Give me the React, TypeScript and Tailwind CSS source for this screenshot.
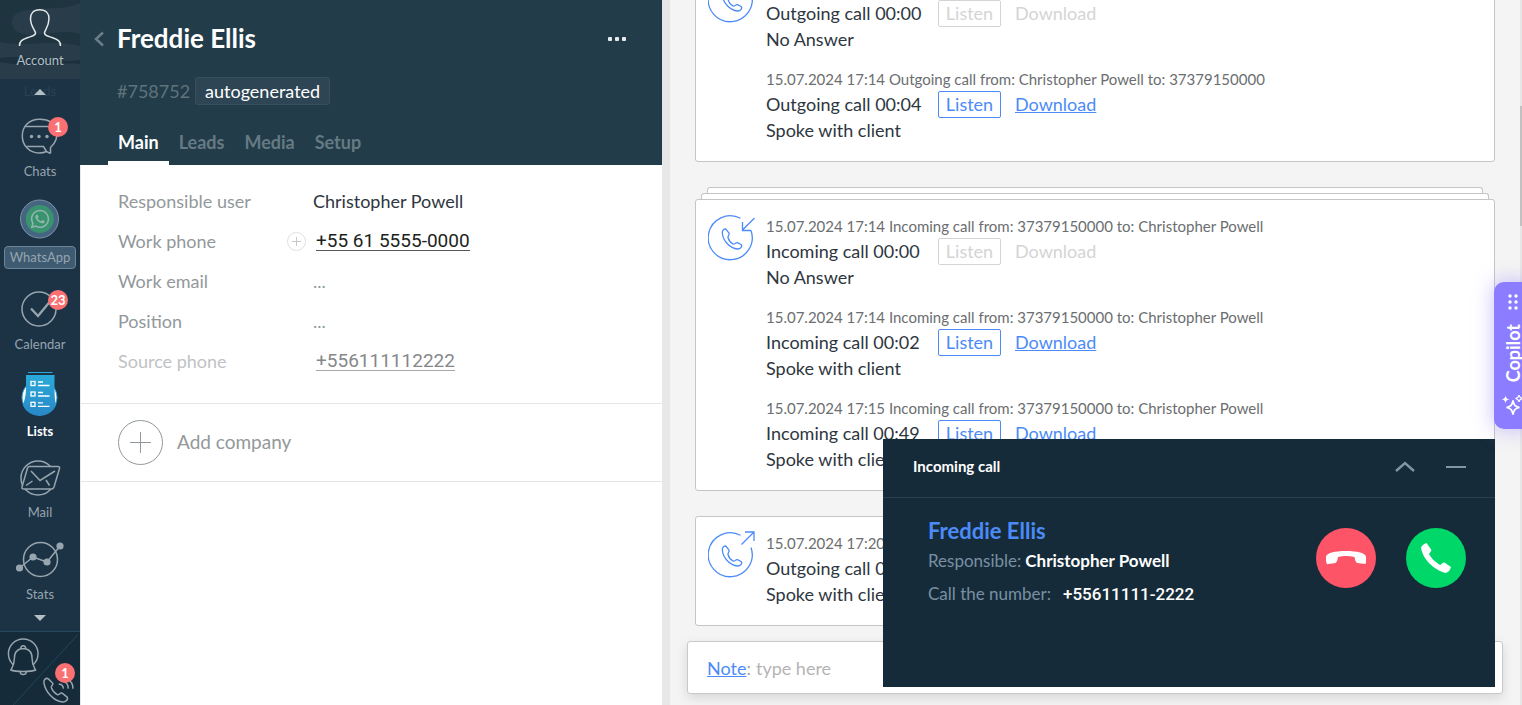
import type { ReactNode } from "react";
import { FaWhatsapp } from "react-icons/fa";

interface CallEntry {
  meta: string;
  title: string;
  result: string;
  recording?: "ready" | "missing";
}

interface NavItem {
  label: string;
  icon: ReactNode;
  height: string;
  badge?: string;
  variant?: "boxed" | "active";
}

const outgoingCalls: CallEntry[] = [
  {
    meta: "15.07.2024 17:14 Outgoing call from: Christopher Powell to: 37379150000",
    title: "Outgoing call 00:00",
    result: "No Answer",
    recording: "missing",
  },
  {
    meta: "15.07.2024 17:14 Outgoing call from: Christopher Powell to: 37379150000",
    title: "Outgoing call 00:04",
    result: "Spoke with client",
    recording: "ready",
  },
];

const incomingCalls: CallEntry[] = [
  {
    meta: "15.07.2024 17:14 Incoming call from: 37379150000 to: Christopher Powell",
    title: "Incoming call 00:00",
    result: "No Answer",
    recording: "missing",
  },
  {
    meta: "15.07.2024 17:14 Incoming call from: 37379150000 to: Christopher Powell",
    title: "Incoming call 00:02",
    result: "Spoke with client",
    recording: "ready",
  },
  {
    meta: "15.07.2024 17:15 Incoming call from: 37379150000 to: Christopher Powell",
    title: "Incoming call 00:49",
    result: "Spoke with client",
    recording: "ready",
  },
];

const lastCalls: CallEntry[] = [
  {
    meta: "15.07.2024 17:20",
    title: "Outgoing call 0",
    result: "Spoke with client",
  },
];

function NavSvg({ children }: { children: ReactNode }) {
  return (
    <svg
      className="h-[52px] w-20 shrink-0"
      viewBox="0 0 80 52"
      fill="none"
      stroke="#97a5ae"
      strokeWidth="1.5"
    >
      {children}
    </svg>
  );
}

const navItems: NavItem[] = [
  {
    label: "Chats",
    height: "h-[76px]",
    badge: "1",
    icon: (
      <NavSvg>
        <path d="M50.5 44.5 V38.5 C61 30 59.5 10.5 40 10.3 C28 10.3 22.3 18 22.3 27 C22.3 36.5 29.5 44 39 44 C42 44 44.5 43.5 46.5 42.5 L50.5 44.5" />
        <path d="M25.5 17.5 H48 M26.5 37.5 H43.5 L46.5 42.5" />
        <g fill="#97a5ae" stroke="none">
          <circle cx="31.5" cy="27.5" r="1.7" />
          <circle cx="39" cy="27.5" r="1.7" />
          <circle cx="47" cy="27.5" r="1.7" />
        </g>
      </NavSvg>
    ),
  },
  {
    label: "WhatsApp",
    height: "h-[88px]",
    variant: "boxed",
    icon: (
      <NavSvg>
        <circle cx="39.5" cy="25" r="19" fill="#466580" stroke="#7c93a5" strokeWidth="1" />
        <circle cx="39.8" cy="25" r="14" fill="#39936f" stroke="none" />
        <FaWhatsapp x="29.5" y="14.5" size={21} color="#8fb5ad" stroke="none" strokeWidth="0" />
      </NavSvg>
    ),
  },
  {
    label: "Calendar",
    height: "h-[85px]",
    badge: "23",
    icon: (
      <NavSvg>
        <circle cx="39" cy="27" r="17" />
        <path d="M31 26.5 L38 34 L50 19.5" strokeWidth="2.4" />
      </NavSvg>
    ),
  },
  {
    label: "Lists",
    height: "h-[87px]",
    variant: "active",
    icon: (
      <NavSvg>
        <defs>
          <linearGradient id="listsFill" x1="0" y1="0" x2="0" y2="1">
            <stop offset="0" stopColor="#2aaad9" />
            <stop offset="1" stopColor="#2888c8" />
          </linearGradient>
        </defs>
        <circle cx="39.5" cy="28.5" r="17.5" fill="#fff" stroke="#2a98cf" strokeWidth="1" />
        <path
          d="M26 6 H54.5 V19 C54.5 29 55.5 34 56.3 36 A18.3 18.3 0 0 1 22.7 36 C24 33 26 28 26 19 Z"
          fill="url(#listsFill)"
          stroke="none"
        />
        <path d="M28 3.5 H52.5" stroke="#2aaad9" strokeWidth="1" />
        <g stroke="#fff" strokeWidth="1.3">
          <rect x="31" y="12.5" width="4" height="4" />
          <rect x="31" y="23" width="4" height="4" />
          <rect x="31" y="33.3" width="4" height="4" />
          <path d="M38 13 H43 M38 16.5 H49.5 M38 23.5 H43 M38 27 H49.5 M38 33.8 H43 M38 37.3 H49.5" />
        </g>
      </NavSvg>
    ),
  },
  {
    label: "Mail",
    height: "h-[81px]",
    icon: (
      <NavSvg>
        <circle cx="38" cy="28" r="17" />
        <path
          d="M29.5 16.5 H58 Q60 16.5 59.5 18.5 L54 37 Q53.3 39 51.3 39 H23.5 Q21.5 39 22 37 L27.5 18 Q28 16.5 29.5 16.5 Z"
          fill="#1c3346"
        />
        <path d="M31 21 L40 30.5 L55 21 M26 35.5 L32.5 31 M46 30 L49.5 35.5" />
      </NavSvg>
    ),
  },
  {
    label: "Stats",
    height: "h-[82px]",
    icon: (
      <NavSvg>
        <circle cx="40.5" cy="27.5" r="17" />
        <path d="M19.5 36 L33 25 L47 30 L60 14" />
        <g fill="#97a5ae" stroke="none">
          <circle cx="19.5" cy="36" r="3.6" />
          <circle cx="33" cy="25" r="3.6" />
          <circle cx="47" cy="30" r="3.6" />
          <circle cx="60" cy="14" r="3.6" />
        </g>
      </NavSvg>
    ),
  },
];

function Badge({ children, className }: { children: ReactNode; className: string }) {
  return (
    <span
      className={`absolute flex h-5 min-w-5 items-center justify-center rounded-full bg-[#fb7073] text-[13px] leading-none font-bold text-white ${className}`}
    >
      {children}
    </span>
  );
}

function Sidebar() {
  return (
    <nav className="flex w-20 shrink-0 flex-col bg-[#1c3346] text-[13px] text-[#97a5ae]">
      <button
        type="button"
        className="relative flex h-[79px] shrink-0 flex-col items-center"
      >
        <svg className="absolute inset-0 h-full w-full" viewBox="0 0 80 79" preserveAspectRatio="none">
          <rect width="80" height="79" fill="#283c49" />
          <path d="M0 0 H80 V3 C60 12 45 5 20 12 C8 16 10 30 22 34 C40 38 60 28 80 34 V46 C50 38 30 48 0 42 Z" fill="#1e343f" />
          <path d="M0 58 C25 54 50 64 80 60 V64 C50 62 30 68 0 62 Z" fill="#1c313e" />
        </svg>
        <svg
          className="relative h-[50px] w-20"
          viewBox="0 0 80 50"
          fill="none"
          stroke="#e3e7ea"
          strokeWidth="1.5"
        >
          <path d="M19.5 46 C19.5 41 22 39.5 28 37.5 C33 36 35.5 35.5 35.5 33 C35.5 30.5 30.5 26.5 30.5 18.5 C30.5 13.5 33.5 9.8 39.7 9.8 S49 13.5 49 18.5 C49 26.5 44.5 30.5 44.5 33 C44.5 35.5 47 36 52 37.5 C58 39.5 60.5 41 60.5 46" />
        </svg>
        <span className="relative leading-5 text-[#b4bec5]">Account</span>
      </button>
      <div className="relative flex h-[26px] shrink-0 items-center justify-center text-[#2a4254]">
        Leads
        <svg className="absolute h-[6px] w-3" viewBox="0 0 12 6" fill="#b4bec5">
          <path d="M0 6 L6 0 L12 6 Z" />
        </svg>
      </div>
      {navItems.map((item) => (
        <button
          key={item.label}
          type="button"
          className={`relative flex shrink-0 flex-col items-center justify-end ${item.height}`}
        >
          <span className="relative">
            {item.icon}
            {item.badge && <Badge className="top-2 right-3">{item.badge}</Badge>}
          </span>
          {item.variant === "boxed" ? (
            <span className="rounded border border-[#6c8597] bg-[#3e5b72] px-[5px] leading-[21px]">
              {item.label}
            </span>
          ) : item.variant === "active" ? (
            <span className="leading-5 font-bold text-white">{item.label}</span>
          ) : (
            <span className="leading-5">{item.label}</span>
          )}
        </button>
      ))}
      <div className="flex flex-1 items-center justify-center">
        <svg className="h-[6px] w-3" viewBox="0 0 12 6" fill="#b4bec5">
          <path d="M0 0 L6 6 L12 0 Z" />
        </svg>
      </div>
      <div className="relative h-[74px] shrink-0 border-t border-[#244a5e] bg-[#152b39]">
        <svg
          className="h-full w-full"
          viewBox="0 0 80 74"
          fill="none"
          stroke="#97a5ae"
          strokeWidth="1.5"
        >
          <path d="M78 3 L13 74" stroke="#22485c" strokeWidth="1" />
          <circle cx="23" cy="22" r="15" />
          <path
            d="M20.5 17 C20.5 13 25.5 13 25.5 17 C31 18.5 32 23 32 27 C32 33 33.5 35 35.5 38.5 C31 40.5 15 40.5 10.5 38.5 C12.5 35 14 33 14 27 C14 23 15 18.5 20.5 17 Z"
            fill="#152b39"
          />
          <path d="M20.5 17 H25.5 M20 40.5 C20 44 26 44 26 40.5" />
          <path d="M48.5 47.5 C46 46 43.5 48.5 44 51.5 C45.5 61 54 70 62.5 71 C66 71.5 69 68 67.5 66 L62.5 62 C60 61 59.5 64.5 57.5 63.5 C54.5 62 52.5 59 51.5 56.5 C51 54.5 53.5 54 53 52 Z" />
          <path d="M59 53 C62 52.5 64 55 63.5 57.5 M63 50 C67 50.5 69 54 68.5 57.5 M68 48 C72 50 73.5 54 73.3 57.5" />
        </svg>
        <Badge className="top-[31px] right-[5px]">1</Badge>
      </div>
    </nav>
  );
}

function FieldRow({ label, muted, children }: { label: string; muted?: boolean; children: ReactNode }) {
  return (
    <div className="flex h-10 items-center">
      <dt className={`w-[195px] shrink-0 ${muted ? "text-[#bfc2c4]" : "text-[#92989b]"}`}>{label}</dt>
      <dd className="relative flex items-center">{children}</dd>
    </div>
  );
}

function ContactPanel() {
  return (
    <section className="w-[582px] shrink-0 border-l border-[#e8e8e8] bg-white">
      <header className="-ml-px bg-[#223d49] pt-5">
        <div className="flex h-9 items-center pr-9 pl-[14px]">
          <button type="button" aria-label="Back" className="pt-[2px]">
            <svg className="h-4 w-[10px]" viewBox="0 0 10 16" fill="none" stroke="#6c7f89" strokeWidth="2.4">
              <path d="M9 1.5 L2 8 L9 14.5" />
            </svg>
          </button>
          <h1 className="ml-[13px] text-[26px] font-bold text-white">Freddie Ellis</h1>
          <button type="button" aria-label="More" className="ml-auto flex gap-[3px] pt-[2px]">
            <span className="size-1 rounded-[1px] bg-[#e9ecee]" />
            <span className="size-1 rounded-[1px] bg-[#e9ecee]" />
            <span className="size-1 rounded-[1px] bg-[#e9ecee]" />
          </button>
        </div>
        <div className="mt-[21px] flex items-center gap-[5px] pl-[37px] text-lg">
          <span className="text-[#5f737d]">#758752</span>
          <span className="rounded-[3px] border border-[#384f5e] bg-[#2d4554] px-[9px] leading-[26px] text-white">
            autogenerated
          </span>
        </div>
        <div className="mt-[18px] flex pl-7 text-lg leading-[38px] font-bold text-[#667a84]">
          <button type="button" className="border-b-4 border-white px-[10px] text-white">
            Main
          </button>
          <button type="button" className="border-b-4 border-transparent px-[10px]">Leads</button>
          <button type="button" className="border-b-4 border-transparent px-[10px]">Media</button>
          <button type="button" className="border-b-4 border-transparent px-[10px]">Setup</button>
        </div>
      </header>
      <dl className="border-b border-[#e3e5e6] pt-4 pb-[22px] pl-[37px] text-lg">
        <FieldRow label="Responsible user">
          <span className="text-[#2e3640]">Christopher Powell</span>
        </FieldRow>
        <FieldRow label="Work phone">
          <button
            type="button"
            aria-label="Add phone"
            className="absolute -left-[26px] flex size-[19px] items-center justify-center rounded-full border border-[#e0e0e0]"
          >
            <svg className="size-[9px]" viewBox="0 0 9 9" stroke="#c8c8c8" strokeWidth="1">
              <path d="M0 4.5 H9 M4.5 0 V9" />
            </svg>
          </button>
          <a
            href="#work-phone"
            className="ml-[3px] border-b border-[#55585b] font-[Roboto] text-[19px] leading-[19px] text-[#1d1f22]"
          >
            +55 61 5555-0000
          </a>
        </FieldRow>
        <FieldRow label="Work email">
          <span className="text-[#92989b]">...</span>
        </FieldRow>
        <FieldRow label="Position">
          <span className="text-[#92989b]">...</span>
        </FieldRow>
        <FieldRow label="Source phone" muted>
          <a
            href="#source-phone"
            className="ml-[3px] border-b border-[#a5a8aa] font-[Roboto] text-[19px] leading-[19px] text-[#85888a]"
          >
            +556111112222
          </a>
        </FieldRow>
      </dl>
      <button
        type="button"
        className="flex h-[78px] w-full items-center gap-[14px] border-b border-[#e3e5e6] pl-[37px] text-[19px] text-[#92989b]"
      >
        <svg className="size-[45px]" viewBox="0 0 45 45" fill="none" stroke="#92989b">
          <circle cx="22.5" cy="22.5" r="22" />
          <path d="M12 22.5 H33 M22.5 12 V33" />
        </svg>
        Add company
      </button>
    </section>
  );
}

function CallIcon({ incoming }: { incoming?: boolean }) {
  return (
    <svg
      className="h-[49px] w-[50px] shrink-0"
      viewBox="0 -1 50 49"
      fill="none"
      stroke="#4c8bf7"
      strokeWidth="1.3"
    >
      <path d="M32.5 3.3 A22 22 0 1 0 43 15.5" />
      <path d="M18.5 14.8 C17 12.8 14 15 14.3 18 C15 26 22 33.5 29.5 34 C32.5 34.2 35 31 33 29.5 L29.5 27.6 C27.5 27 27 30 25 29 C22.5 27.5 20.5 24.5 20 22.5 C19.5 20.5 22 20 21 18 Z" />
      {incoming ? (
        <path d="M46.5 3 L34.5 15 M34.5 7 V15.5 H43" />
      ) : (
        <path d="M33.5 12.5 L45.5 0.5 M37 0 H46 V9" />
      )}
    </svg>
  );
}

function CallRow({ entry }: { entry: CallEntry }) {
  return (
    <li>
      <p className="text-[15px] leading-6 text-[#6b6e70]">{entry.meta}</p>
      <div className="flex h-[26px] items-center text-lg">
        <span className="w-[172px] shrink-0">{entry.title}</span>
        {entry.recording && (
          <button
            type="button"
            disabled={entry.recording === "missing"}
            className="w-[63px] rounded-[2px] border border-[#4c8bf7] leading-[25px] text-[#4c8bf7] disabled:border-[#d4d4d4] disabled:text-[#d4d4d4]"
          >
            Listen
          </button>
        )}
        {entry.recording === "ready" && (
          <a href="#download" className="ml-[14px] text-[#4c8bf7] underline">
            Download
          </a>
        )}
        {entry.recording === "missing" && <span className="ml-[14px] text-[#d4d4d4]">Download</span>}
      </div>
      <p className="text-lg leading-[26px]">{entry.result}</p>
    </li>
  );
}

function CallCard({ entries, incoming }: { entries: CallEntry[]; incoming?: boolean }) {
  return (
    <article className="flex gap-2 rounded-[3px] border border-[#c5c5c5] bg-white pt-[14px] pb-[18px] pl-3 text-[#2e3640]">
      <CallIcon incoming={incoming} />
      <ul className="flex flex-col gap-[15px]">
        {entries.map((entry) => (
          <CallRow key={entry.title} entry={entry} />
        ))}
      </ul>
    </article>
  );
}

function Feed() {
  return (
    <main className="flex min-w-0 flex-1 flex-col justify-end border-l-8 border-[#e8e8e8] bg-[#f4f4f4] pb-[11px]">
      <div className="flex flex-col gap-[25px] pr-[27px] pl-[25px]">
        <CallCard entries={outgoingCalls} />
        <div>
          {/* Collapsed calls peeking out behind the card */}
          <div className="mx-3 h-[6px] rounded-t-[3px] border border-b-0 border-[#c5c5c5] bg-white" />
          <div className="mx-[6px] h-[6px] rounded-t-[3px] border border-b-0 border-[#c5c5c5] bg-white" />
          <CallCard entries={incomingCalls} incoming />
        </div>
        <CallCard entries={lastCalls} />
      </div>
      <div className="mt-[15px] mr-[19px] ml-[17px] flex h-[53px] shrink-0 items-center rounded-[3px] border border-[#c9c9c9] bg-white pl-[19px] text-lg text-[#a5a5a5] shadow-[0_4px_12px_rgba(0,0,0,0.12)]">
        <a href="#note" className="text-[#4c8bf7] underline">Note</a>
        <label htmlFor="note">:</label>
        <input
          id="note"
          type="text"
          placeholder="type here"
          className="ml-[5px] min-w-0 flex-1 outline-none placeholder:text-[#b4b4b4]"
        />
      </div>
    </main>
  );
}

function IncomingCallWindow() {
  return (
    <aside className="absolute right-[27px] bottom-[18px] h-[248px] w-[612px] bg-[#162b39]">
      <div className="flex h-[59px] items-center border-b border-[#2b404f] pr-[29px] pb-[3px] pl-[30px]">
        <h2 className="mr-auto text-[15px] font-bold text-white">Incoming call</h2>
        <button type="button" aria-label="Expand" className="mr-[31px]">
          <svg className="h-[11px] w-5" viewBox="0 0 20 11" fill="none" stroke="#8196a5" strokeWidth="2.4">
            <path d="M1 10 L10 2 L19 10" />
          </svg>
        </button>
        <button type="button" aria-label="Minimize" className="h-[2px] w-5 bg-[#8196a5]" />
      </div>
      <div className="flex pt-[18px] pr-[29px] pl-[45px]">
        <div className="mr-auto text-[17px] text-[#7890a3]">
          <a href="#contact" className="block text-[22px] leading-[30px] font-bold text-[#4c8bf7]">
            Freddie Ellis
          </a>
          <p className="flex gap-1 leading-[30px]">
            <span>Responsible:</span>
            <strong className="text-white">Christopher Powell</strong>
          </p>
          <p className="flex gap-3 leading-9">
            <span>Call the number:</span>
            <span className="font-[Roboto] font-medium text-white">+55611111-2222</span>
          </p>
        </div>
        <div className="flex gap-[30px] pt-3">
          <button
            type="button"
            aria-label="Decline"
            className="flex size-[60px] items-center justify-center rounded-full bg-[#fe5468]"
          >
            <svg className="h-[14px] w-10" viewBox="0 0 40 14" fill="#fff">
              <path d="M0 6 C0 2 9 0 20 0 S40 2 40 6 C40.5 9 40 11 39.5 13 L31 12 C29.5 11 29 9 28.5 6 C23 4.8 17 4.8 12 6 C11.5 9 11 11 9.5 12 L1 13.3 C0 11 -0.3 9 0 6 Z" />
            </svg>
          </button>
          <button
            type="button"
            aria-label="Answer"
            className="flex size-[60px] items-center justify-center rounded-full bg-[#00d769]"
          >
            <svg className="size-[30px]" viewBox="0 0 30 30" fill="#fff">
              <path d="M5.5 0 L10.5 7 C10 8.5 9 9.5 8 11 C10.5 15.5 15 20 19.5 22 C20.5 20.5 22 19.7 23.5 19.5 L30 24 C29 27 27.5 29.5 24.5 30 C13 27 1.5 16 0 4.5 C1 2.5 3 0.5 5.5 0 Z" />
            </svg>
          </button>
        </div>
      </div>
    </aside>
  );
}

function CopilotTab() {
  return (
    <button
      type="button"
      className="absolute -right-[10px] top-[282px] flex h-[147px] w-[38px] flex-col items-center rounded-[10px] bg-[#8c7cff] pt-3 text-lg font-bold text-white shadow-[0_0_20px_rgba(140,124,255,0.5)]"
    >
      <svg className="h-4 w-[10px]" viewBox="0 0 10 16" fill="#fff">
        <circle cx="2" cy="2" r="1.7" />
        <circle cx="8" cy="2" r="1.7" />
        <circle cx="2" cy="8" r="1.7" />
        <circle cx="8" cy="8" r="1.7" />
        <circle cx="2" cy="14" r="1.7" />
        <circle cx="8" cy="14" r="1.7" />
      </svg>
      <span className="mt-[14px] rotate-180 leading-6 [writing-mode:vertical-rl]">Copilot</span>
      <svg className="mt-3 h-[22px] w-6" viewBox="0 0 24 22" fill="none" stroke="#fff" strokeWidth="1.7">
        <path d="M12 6.5 C12.8 11 14 12.7 18.5 13.5 C14 14.3 12.8 16 12 20.5 C11.2 16 10 14.3 5.5 13.5 C10 12.7 11.2 11 12 6.5 Z" />
        <path d="M4.5 1.5 C5 4.3 6 5 8.5 5.3 C6 5.7 5 6.5 4.5 9.5 C4 6.5 3 5.7 0.5 5.3 C3 5 4 4.3 4.5 1.5 Z" fill="#fff" stroke="none" />
        <path d="M18 1 C18.5 3.5 19 4 21.5 4.5 C19 5 18.5 5.5 18 8 C17.5 5.5 17 5 14.5 4.5 C17 4 17.5 3.5 18 1 Z" strokeWidth="1.2" />
      </svg>
    </button>
  );
}

function App() {
  return (
    <div className="relative flex h-screen overflow-hidden bg-white font-[Lato,'Noto_Sans',sans-serif]">
      <Sidebar />
      <ContactPanel />
      <Feed />
      <div className="absolute inset-y-0 right-0 w-[2px] bg-[#e6e6e6]">
        <div className="mt-[106px] h-[120px] bg-[#c1c1c1]" />
      </div>
      <IncomingCallWindow />
      <CopilotTab />
    </div>
  );
}

export default App;
